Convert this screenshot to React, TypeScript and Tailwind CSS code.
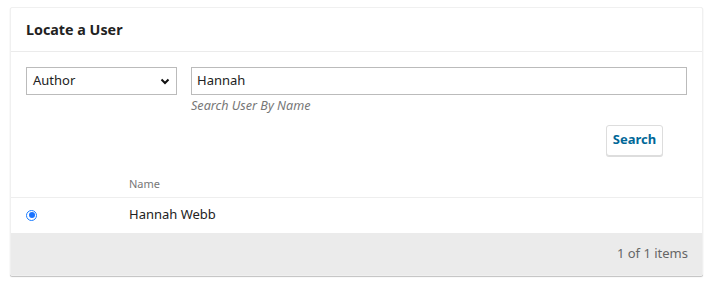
import React from "react";

export default function App() {
  return (
    <div className="w-[712px] h-[289px] bg-white pt-[7px] pl-[10px]" style={{ fontFamily: '"Noto Sans", sans-serif' }}>
      <div className="w-[693px] bg-white border border-[#f0f0f0] rounded-[2px] shadow-[0_1px_1px_rgba(0,0,0,0.25)]">
        <div className="h-[44px] flex items-center px-[15px] border-b border-[#ebebeb]">
          <h2 className="text-[14.3px] font-bold text-[#222]">Locate a User</h2>
        </div>
        <div className="pt-[15px] px-[15px] flex gap-[14px]">
          <div className="w-[151px] h-[28px] border border-[#bbb] flex items-center justify-between pl-[6px] pr-[4px] text-[13px] text-[#222]">
            <span>Author</span>
            <svg width="12" height="12" viewBox="0 0 12 12" className="mr-[1px]">
              <path d="M2.5 4.5 L6 8 L9.5 4.5" fill="none" stroke="#111" strokeWidth="2" />
            </svg>
          </div>
          <div className="flex-1 flex flex-col">
            <div className="h-[28px] border border-[#bbb] flex items-center pl-[5px] text-[13px] text-[#222]">Hannah</div>
            <div className="mt-[1.5px] text-[12.6px] italic text-[#777] leading-[18px]">Search User By Name</div>
          </div>
        </div>
        <div className="flex justify-end pr-[39px] pt-[10px]">
          <button className="w-[57px] h-[31px] border border-[#ddd] rounded-[3px] shadow-[0_1px_0_#ddd] text-[13px] font-bold text-[#006798] bg-white">Search</button>
        </div>
        <div className="mt-[20px] h-[22px] border-b border-[#eee] flex items-start text-[11px] text-[#777]">
          <span className="ml-[118px] leading-[16px]">Name</span>
        </div>
        <div className="h-[35px] flex items-center">
          <div className="ml-[15px] w-[11px] h-[11px] rounded-full border-[1.5px] border-[#1a7dff] flex items-center justify-center">
            <div className="w-[6px] h-[6px] rounded-full bg-[#1a73ff]" />
          </div>
          <span className="ml-[92px] text-[13px] text-[#222]">Hannah Webb</span>
        </div>
        <div className="h-[42px] bg-[#ebebeb] flex items-center justify-end pr-[14px] text-[13px] text-[#666]">1 of 1 items</div>
      </div>
    </div>
  );
}
